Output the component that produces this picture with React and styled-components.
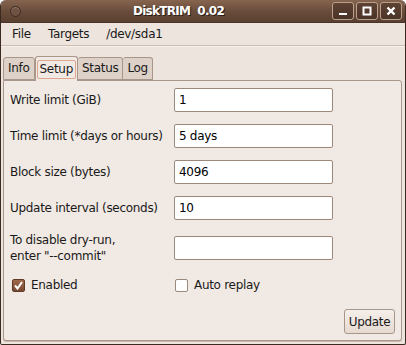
import React, { useState } from "react";
import styled, { createGlobalStyle } from "styled-components";

const GlobalStyle = createGlobalStyle`
  html, body {
    margin: 0;
    padding: 0;
    background: #ffffff;
  }
  body {
    font-family: "DejaVu Sans", "Liberation Sans", sans-serif;
    font-size: 12px;
    letter-spacing: -0.3px;
    color: #1a1a1a;
  }
`;

const Window = styled.div`
  width: 406px;
  height: 345px;
  box-sizing: border-box;
  display: flex;
  flex-direction: column;
  background: #ede4dd;
  border: 1px solid #3b2a20;
  border-top: none;
  border-radius: 6px 6px 2px 2px;
  overflow: hidden;
`;

const TitleBar = styled.div`
  height: 22px;
  flex: none;
  display: flex;
  align-items: center;
  background: linear-gradient(#86654f, #6a4d3c 50%, #5a4031);
  border-bottom: 1px solid #4a3428;
  padding: 0 3px 0 9px;
`;

const MenuCircle = styled.div`
  width: 9px;
  height: 9px;
  border-radius: 50%;
  border: 1px solid #3e2a1f;
  box-shadow: inset 0 1px 1px rgba(255, 255, 255, 0.25);
  background: #6e5242;
`;

const Title = styled.div`
  flex: 1;
  text-align: center;
  color: #ffffff;
  font-weight: bold;
  font-size: 12px;
  letter-spacing: -0.7px;
  white-space: pre;
  text-shadow: 1px 1px 0 #2c1d14;
  padding-left: 4px;
`;

const WinButtons = styled.div`
  display: flex;
  gap: 2px;
`;

const WinButton = styled.div`
  width: 20px;
  height: 16px;
  border: 1px solid #b99f8c;
  border-radius: 3px;
  background: linear-gradient(#5e4334, #4a3327);
  display: flex;
  align-items: center;
  justify-content: center;
`;

const MenuBar = styled.div`
  height: 22px;
  flex: none;
  display: flex;
  align-items: center;
  padding: 0 2px;
  border-bottom: 1px solid #cdbcaf;
  box-shadow: 0 1px 0 #f7f1ed;
`;

const MenuItem = styled.div`
  padding: 0 8px 0 9px;
`;

const Tabs = styled.div`
  margin-top: 10px;
  padding-left: 2px;
  display: flex;
  align-items: flex-end;
  height: 24px;
  flex: none;
`;

const Tab = styled.div`
  box-sizing: border-box;
  height: ${(p) => (p.$active ? "25px" : "23px")};
  margin-bottom: ${(p) => (p.$active ? "-1px" : "0")};
  padding: 0 1px;
  display: flex;
  align-items: center;
  background: ${(p) => (p.$active ? "#f1e9e3" : "#ddd1c8")};
  border: 1px solid #a9968a;
  border-bottom: ${(p) => (p.$active ? "none" : "1px solid #a9968a")};
  border-left: ${(p) => (p.$first || p.$active ? "1px solid #a9968a" : "none")};
  border-radius: 3px 3px 0 0;
  position: relative;
  z-index: ${(p) => (p.$active ? 2 : 1)};
`;

const TabLabel = styled.span`
  padding: 1px 2px;
  border: 1px solid ${(p) => (p.$focus ? "#e0a58f" : "transparent")};
  border-radius: 2px;
  line-height: 15px;
`;

const Panel = styled.div`
  flex: 1;
  margin: 0 3px 3px 2px;
  background: #f1e9e3;
  border: 1px solid #a9968a;
  border-radius: 0 3px 3px 3px;
  box-shadow: 0 1px 0 #c9b8ab;
  padding: 7px 0 6px 6px;
  display: flex;
  flex-direction: column;
  position: relative;
  z-index: 1;
`;

const Form = styled.div`
  display: grid;
  grid-template-columns: 164px 159px;
  row-gap: 12px;
  align-items: center;
`;

const Label = styled.div`
  line-height: 16px;
`;

const Input = styled.input`
  box-sizing: border-box;
  width: 159px;
  height: 24px;
  border: 1px solid #9b897c;
  border-radius: 2px;
  background: #ffffff;
  font-family: "DejaVu Sans", "Liberation Sans", sans-serif;
  font-size: 12px;
  letter-spacing: -0.3px;
  color: #000;
  padding: 0 4px;
  outline: none;
`;

const Checks = styled.div`
  display: grid;
  grid-template-columns: 163px 160px;
  margin-top: 14px;
  padding-left: 2px;
`;

const CheckRow = styled.label`
  display: flex;
  align-items: center;
  gap: 6px;
`;

const Box = styled.span`
  box-sizing: border-box;
  width: 13px;
  height: 13px;
  border-radius: 2px;
  border: 1px solid ${(p) => (p.$checked ? "#5d3a26" : "#9b897c")};
  background: ${(p) =>
    p.$checked ? "linear-gradient(#a0684a, #7a4a32)" : "#ffffff"};
  display: flex;
  align-items: center;
  justify-content: center;
`;

const Footer = styled.div`
  margin-top: auto;
  display: flex;
  justify-content: flex-end;
  padding-right: 6px;
`;

const Button = styled.button`
  box-sizing: border-box;
  width: 51px;
  height: 25px;
  border: 1px solid #a9968a;
  border-radius: 3px;
  background: linear-gradient(#f5efea, #e6dad1);
  font-family: "DejaVu Sans", "Liberation Sans", sans-serif;
  font-size: 12px;
  letter-spacing: -0.3px;
  color: #1a1a1a;
  padding: 0;
`;

const fields = [
  { label: "Write limit (GiB)", value: "1" },
  { label: "Time limit (*days or hours)", value: "5 days" },
  { label: "Block size (bytes)", value: "4096" },
  { label: "Update interval (seconds)", value: "10" },
  { label: ["To disable dry-run,", 'enter "--commit"'], value: "" },
];

const Check = ({ checked, label }) => (
  <CheckRow>
    <Box $checked={checked}>
      {checked && (
        <svg width="9" height="9" viewBox="0 0 9 9">
          <path
            d="M1 4.5 L3.5 7.5 L8 1"
            fill="none"
            stroke="#ffffff"
            strokeWidth="2"
          />
        </svg>
      )}
    </Box>
    {label}
  </CheckRow>
);

const App = () => {
  const [values, setValues] = useState(fields.map((f) => f.value));

  return (
    <>
      <GlobalStyle />
      <Window>
        <TitleBar>
          <MenuCircle />
          <Title>DiskTRIM  0.02</Title>
          <WinButtons>
            <WinButton>
              <svg width="10" height="10" viewBox="0 0 10 10">
                <rect x="1" y="7" width="8" height="2" fill="#fff" />
              </svg>
            </WinButton>
            <WinButton>
              <svg width="10" height="10" viewBox="0 0 10 10">
                <rect x="1.5" y="1.5" width="7" height="7" fill="none" stroke="#fff" strokeWidth="2" />
              </svg>
            </WinButton>
            <WinButton>
              <svg width="10" height="10" viewBox="0 0 10 10">
                <path d="M1.5 1.5 L8.5 8.5 M8.5 1.5 L1.5 8.5" stroke="#fff" strokeWidth="2.4" />
              </svg>
            </WinButton>
          </WinButtons>
        </TitleBar>
        <MenuBar>
          <MenuItem>File</MenuItem>
          <MenuItem>Targets</MenuItem>
          <MenuItem>/dev/sda1</MenuItem>
        </MenuBar>
        <Tabs>
          <Tab $first>
            <TabLabel>Info</TabLabel>
          </Tab>
          <Tab $active>
            <TabLabel $focus>Setup</TabLabel>
          </Tab>
          <Tab>
            <TabLabel>Status</TabLabel>
          </Tab>
          <Tab>
            <TabLabel>Log</TabLabel>
          </Tab>
        </Tabs>
        <Panel>
          <Form>
            {fields.map((f, i) => (
              <React.Fragment key={i}>
                <Label>
                  {Array.isArray(f.label)
                    ? f.label.map((l) => <div key={l}>{l}</div>)
                    : f.label}
                </Label>
                <Input
                  value={values[i]}
                  onChange={(e) => {
                    const next = [...values];
                    next[i] = e.target.value;
                    setValues(next);
                  }}
                />
              </React.Fragment>
            ))}
          </Form>
          <Checks>
            <Check checked label="Enabled" />
            <Check label="Auto replay" />
          </Checks>
          <Footer>
            <Button>Update</Button>
          </Footer>
        </Panel>
      </Window>
    </>
  );
};

export default App;
